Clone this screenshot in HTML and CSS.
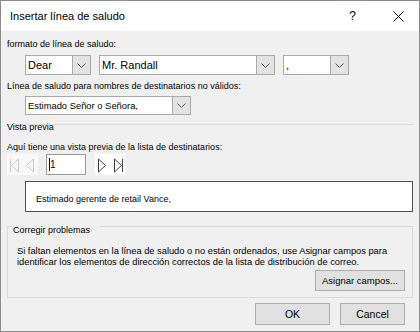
FILE: index.html
```html
<!DOCTYPE html>
<html lang="es">
<head>
    <meta charset="UTF-8">
    <title>Insertar línea de saludo</title>
    <link rel="stylesheet" href="styles.css">
</head>
<body>
    <div class="dialog">
        <!-- Title bar -->
        <div class="titlebar">
            <span class="title">Insertar línea de saludo</span>
            <span class="help">?</span>
            <svg class="close" width="11" height="11" viewBox="0 0 11 11">
                <path d="M0.5 0.5 L10.5 10.5 M10.5 0.5 L0.5 10.5" stroke="#000" stroke-width="1" fill="none"/>
            </svg>
        </div>

        <div class="content">
            <div class="label first">formato de línea de saludo:</div>
            <div class="combo-row">
                <div class="combo combo-small big-text">
                    <span class="combo-value">Dear</span>
                    <span class="combo-btn"><svg width="9" height="5" viewBox="0 0 9 5"><path d="M0.5 0.5 L4.5 4.5 L8.5 0.5" stroke="#555" fill="none"/></svg></span>
                </div>
                <div class="combo combo-name big-text">
                    <span class="combo-value">Mr. Randall</span>
                    <span class="combo-btn"><svg width="9" height="5" viewBox="0 0 9 5"><path d="M0.5 0.5 L4.5 4.5 L8.5 0.5" stroke="#555" fill="none"/></svg></span>
                </div>
                <div class="combo combo-small big-text">
                    <span class="combo-value">,</span>
                    <span class="combo-btn"><svg width="9" height="5" viewBox="0 0 9 5"><path d="M0.5 0.5 L4.5 4.5 L8.5 0.5" stroke="#555" fill="none"/></svg></span>
                </div>
            </div>

            <div class="label second">Línea de saludo para nombres de destinatarios no válidos:</div>
            <div class="combo combo-invalid">
                <span class="combo-value">Estimado Señor o Señora,</span>
                <span class="combo-btn"><svg width="9" height="5" viewBox="0 0 9 5"><path d="M0.5 0.5 L4.5 4.5 L8.5 0.5" stroke="#555" fill="none"/></svg></span>
            </div>

            <!-- Preview -->
            <div class="separator">
                <div class="section-title">Vista previa</div>
            </div>
            <div class="label third">Aquí tiene una vista previa de la lista de destinatarios:</div>
            <div class="nav-row">
                <div class="nav nav-disabled">
                    <svg width="31" height="21" viewBox="0 0 31 21">
                        <path d="M3.5 5 L3.5 18 M11.5 5 L4.5 11.5 L11.5 18 Z M26.5 5 L19.5 11.5 L26.5 18 Z" stroke="#c9c9c9" fill="none"/>
                    </svg>
                </div>
                <div class="record-box"><span class="caret"></span>1</div>
                <div class="nav nav-enabled">
                    <svg width="30" height="21" viewBox="0 0 30 21">
                        <path d="M3.5 5 L10.5 11.5 L3.5 18 Z M19.5 5 L26.5 11.5 L19.5 18 Z M27.5 5 L27.5 18" stroke="#444" fill="none"/>
                    </svg>
                </div>
            </div>
            <div class="preview">Estimado gerente de retail Vance,</div>

            <!-- Fix problems group -->
            <div class="group">
                <div class="group-title">Corregir problemas</div>
                <div class="group-text">Si faltan elementos en la línea de saludo o no están ordenados, use Asignar campos para<br>identificar los elementos de dirección correctos de la lista de distribución de correo.</div>
                <div class="group-actions">
                    <button class="btn btn-fields">Asignar campos...</button>
                </div>
            </div>

            <div class="footer">
                <button class="btn btn-ok">OK</button>
                <button class="btn btn-cancel">Cancel</button>
            </div>
        </div>
    </div>
</body>
</html>
```

FILE: styles.css
```css
body {
    margin: 0;
    font-family: "Liberation Sans", Arial, sans-serif;
}

.dialog {
    width: 420px;
    height: 332px;
    box-sizing: border-box;
    border: 1px solid #8c8c8c;
    background-color: #f0f0f0;
    font-size: 9px;
    line-height: 11px;
    color: #000;
}

/* Title bar */
.titlebar {
    height: 30px;
    background-color: #fff;
    display: flex;
    align-items: center;
    padding-left: 9px;
    font-size: 11px;
    line-height: 13px;
}

.title {
    flex: 1;
}

.help {
    font-size: 12px;
    margin-right: 37px;
}

.close {
    margin-right: 15px;
}

.content {
    padding: 0 6px;
}

.label.first {
    margin-top: 8px;
}

.label.second {
    margin-top: 6px;
}

.label.third {
    margin-top: 9px;
}

/* Combo boxes */
.combo-row {
    display: flex;
    gap: 8px;
    margin-top: 5px;
    margin-left: 18px;
}

.combo {
    display: flex;
    height: 20px;
    box-sizing: border-box;
    border: 1px solid #a9a9a9;
    background-color: #fff;
}

.big-text {
    font-size: 11px;
}

.combo-value {
    flex: 1;
    display: flex;
    align-items: center;
    padding-left: 2px;
    white-space: nowrap;
    overflow: hidden;
}

.combo-btn {
    width: 17px;
    background-color: #e3e3e3;
    border-left: 1px solid #a9a9a9;
    display: flex;
    align-items: center;
    justify-content: center;
}

.combo-small {
    width: 66px;
}

.combo-name {
    width: 176px;
}

.combo-invalid {
    width: 166px;
    height: 19px;
    margin-top: 4px;
    margin-left: 18px;
    font-size: 9.4px;
}

/* Preview section */
.separator {
    margin-top: 9px;
    border-top: 1px solid #dcdcdc;
}

.section-title {
    margin-top: -3px;
}

.nav-row {
    display: flex;
    margin-top: 1px;
    height: 21px;
}

.nav {
    display: flex;
}

.nav-disabled {
    background-color: #f8f8f8;
}

.nav-enabled {
    background-color: #fff;
    margin-left: 9px;
}

.record-box {
    width: 40px;
    height: 21px;
    box-sizing: border-box;
    margin-left: 8px;
    border: 1px solid #9a9a9a;
    background-color: #fff;
    display: flex;
    align-items: center;
    padding-left: 2px;
    font-size: 10px;
}

.caret {
    width: 1px;
    height: 13px;
    background-color: #000;
}

.preview {
    margin-top: 6px;
    margin-left: 18px;
    height: 31px;
    box-sizing: border-box;
    border: 1px solid #505050;
    background-color: #fff;
    padding: 12px 0 0 10px;
}

/* Group box */
.group {
    margin-top: 14px;
    border: 1px solid #d9d9d9;
    padding: 0 7px 6px 9px;
}

.group-title {
    width: fit-content;
    margin: -2px 0 0 -5px;
    padding: 0 10px 0 1px;
    background-color: #f0f0f0;
}

.group-text {
    margin-top: 10px;
    white-space: nowrap;
    font-size: 9.3px;
}

.group-actions {
    display: flex;
    justify-content: flex-end;
    margin-top: 2px;
}

/* Buttons */
.btn {
    font-family: "Liberation Sans", Arial, sans-serif;
    border: 1px solid #adadad;
    background-color: #e1e1e1;
    color: #000;
    padding: 0;
    box-sizing: border-box;
}

.btn-fields {
    width: 90px;
    height: 21px;
    font-size: 9.5px;
}

.footer {
    display: flex;
    justify-content: flex-end;
    gap: 10px;
    margin-top: 5px;
    margin-right: 8px;
}

.btn-ok,
.btn-cancel {
    height: 22px;
    font-size: 10.5px;
}

.btn-ok {
    width: 75px;
}

.btn-cancel {
    width: 65px;
}
```
